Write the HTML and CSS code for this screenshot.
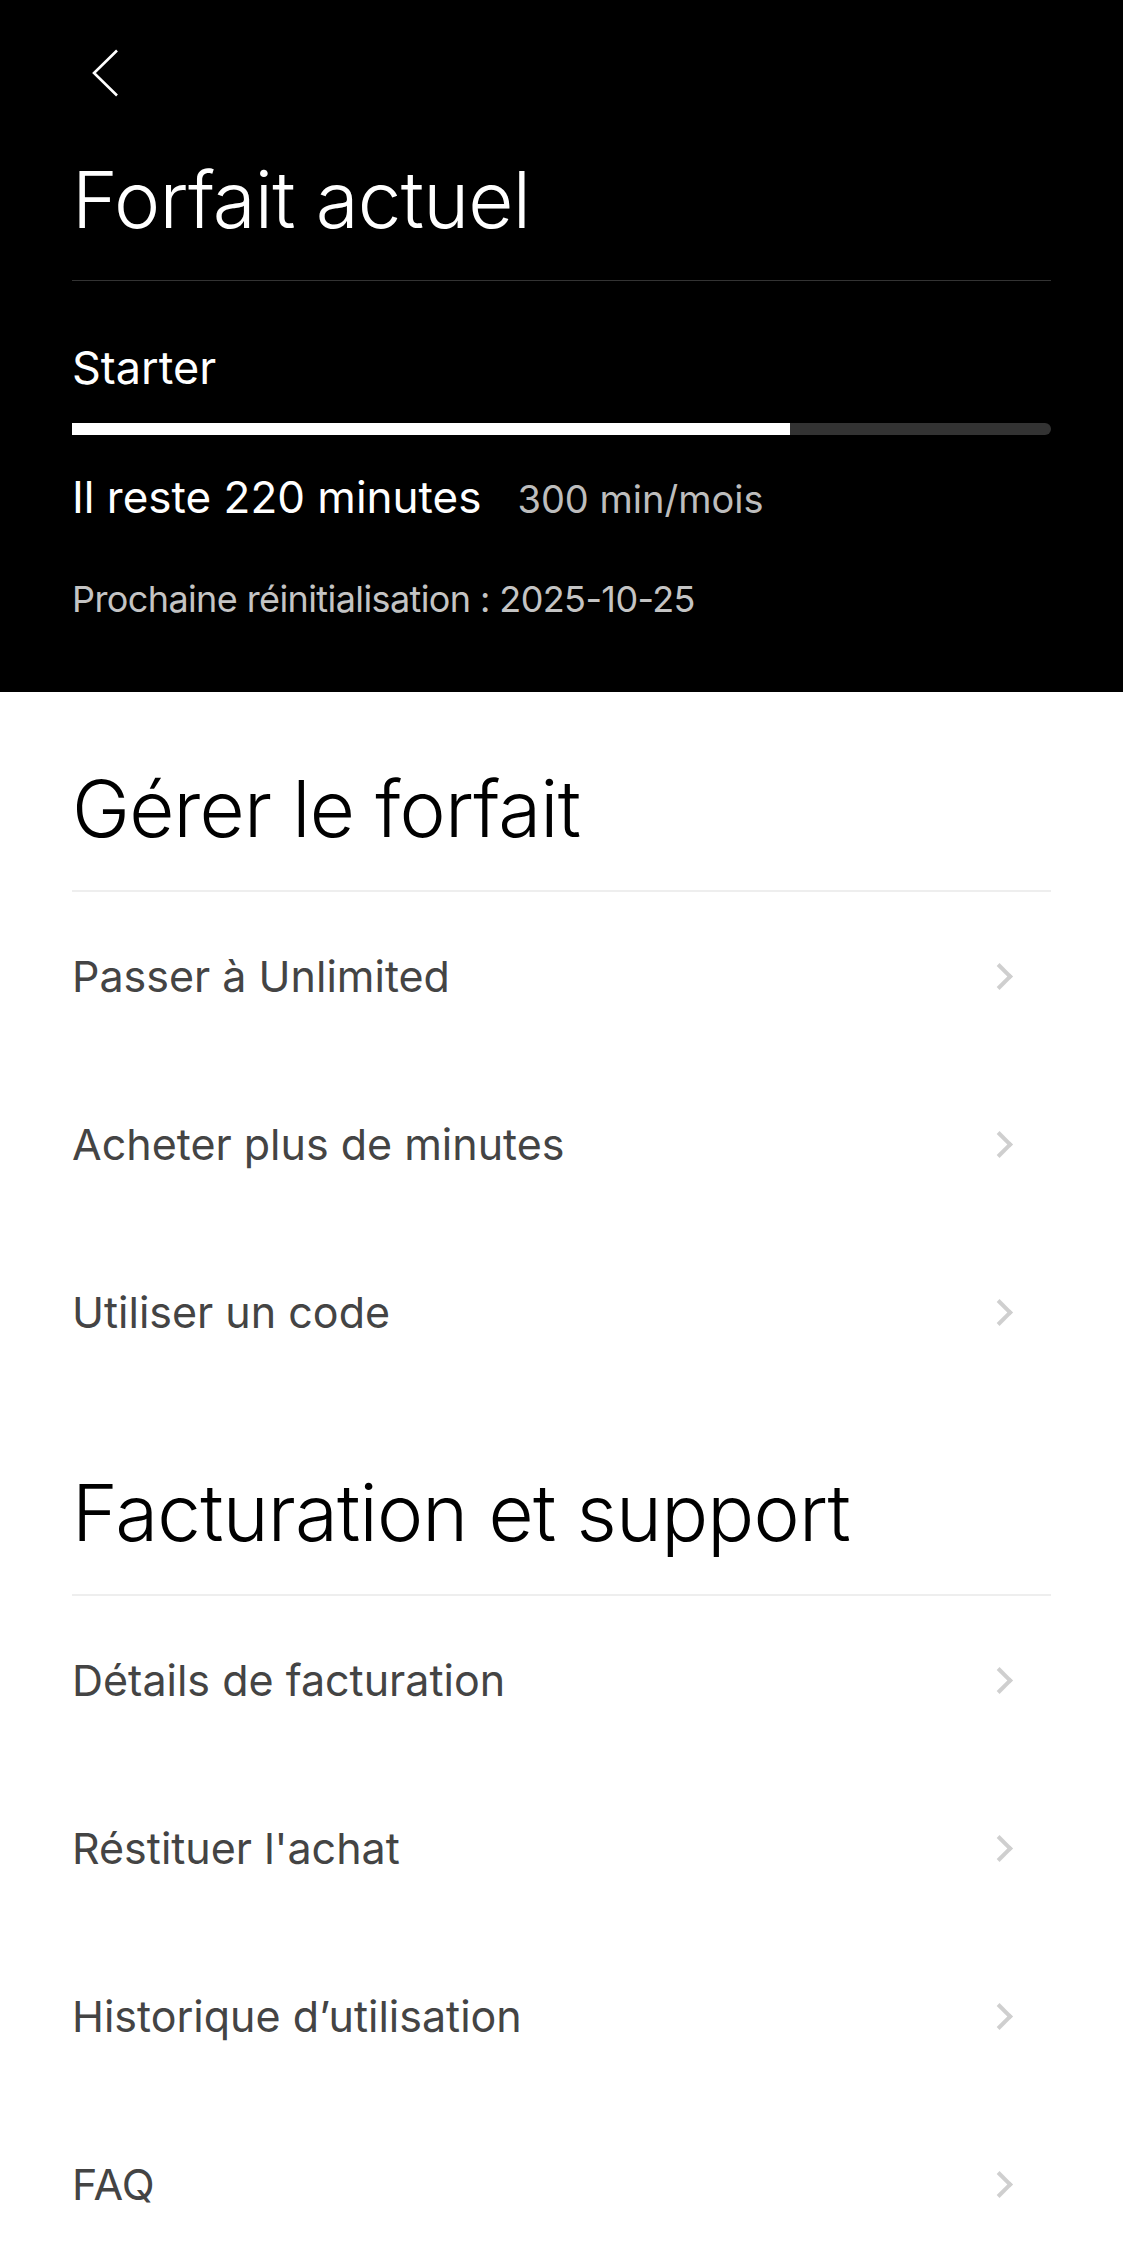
FILE: index.html
```html
<!DOCTYPE html>
<html lang="fr">
<head>
	<meta charset="UTF-8">
	<title>Forfait actuel</title>
<link rel="stylesheet" href="styles.css">
</head>
<body>
<div class="plan">
	<a class="back" href="#">
		<svg width="28" height="48" viewBox="0 0 28 48"><path d="M26 1.5 L3 24 L26 46.5" fill="none" stroke="#fff" stroke-width="2.6"/></svg>
	</a>
	<h1 class="plan-title">Forfait actuel</h1>
	<div class="plan-body">
		<div class="plan-name">Starter</div>
		<div class="bar"><div class="bar-fill" style="width:73.33%"></div></div>
		<div class="plan-left">
			<span class="left-main">Il reste 220 minutes</span>
			<span class="left-total">300 min/mois</span>
		</div>
		<div class="plan-reset">Prochaine réinitialisation : 2025-10-25</div>
	</div>
</div>

<div class="section">
	<h2 class="section-title">Gérer le forfait</h2>
	<ul class="menu">
		<li>Passer à Unlimited<i class="chev"></i></li>
		<li>Acheter plus de minutes<i class="chev"></i></li>
		<li>Utiliser un code<i class="chev"></i></li>
	</ul>
</div>

<div class="section">
	<h2 class="section-title">Facturation et support</h2>
	<ul class="menu">
		<li>Détails de facturation<i class="chev"></i></li>
		<li>Réstituer l'achat<i class="chev"></i></li>
		<li>Historique d’utilisation<i class="chev"></i></li>
		<li>FAQ<i class="chev"></i></li>
	</ul>
</div>
</body>
</html>
```
FILE: styles.css
```css
html,body,h1,h2,ul,li{
	margin:0;
	padding:0;
}
body{
	font-family: Inter, "Noto Sans", sans-serif;
	background: #fff;
}
li{
	list-style: none;
}

.plan{
	background: #000;
	color: #fff;
	height: 692px;
	padding: 0 72px;
	box-sizing: border-box;
}
.back{
	display: block;
	width: 28px;
	height: 48px;
	padding-top: 49px;
	margin-left: 19px;
}
.back svg{
	display: block;
}
.plan-title{
	font-size: 78px;
	font-weight: 300;
	letter-spacing: -0.8px;
	line-height: 96px;
	margin-top: 55px;
	padding-bottom: 32px;
	border-bottom: 1px solid #333;
}
.plan-body{
	padding-top: 60px;
}
.plan-name{
	font-size: 45px;
	font-weight: 400;
	line-height: 53px;
}
.bar{
	height: 12px;
	margin-top: 29px;
	background: #333;
	border-radius: 0 6px 6px 0;
}
.bar-fill{
	height: 12px;
	background: #fff;
}
.plan-left{
	margin-top: 36px;
	line-height: 53px;
	display: flex;
	align-items: baseline;
	gap: 36px;
}
.left-main{
	font-size: 44px;
	font-weight: 400;
}
.left-total{
	font-size: 38px;
	color: #bdbdbd;
}
.plan-reset{
	margin-top: 50px;
	font-size: 36px;
	letter-spacing: -0.6px;
	line-height: 46px;
	color: #c4c4c4;
}

.section{
	padding: 69px 72px 0;
}
.section-title{
	font-size: 78px;
	font-weight: 300;
	letter-spacing: -0.8px;
	line-height: 96px;
	color: #000;
	padding-bottom: 33px;
	border-bottom: 2px solid #eee;
}
.menu li{
	height: 168px;
	display: flex;
	align-items: center;
	justify-content: space-between;
	font-size: 43px;
	color: #444;
}
.chev{
	width: 15px;
	height: 15px;
	border-top: 4px solid #cfcfcf;
	border-right: 4px solid #cfcfcf;
	transform: rotate(45deg);
	margin-right: 42px;
}
```
